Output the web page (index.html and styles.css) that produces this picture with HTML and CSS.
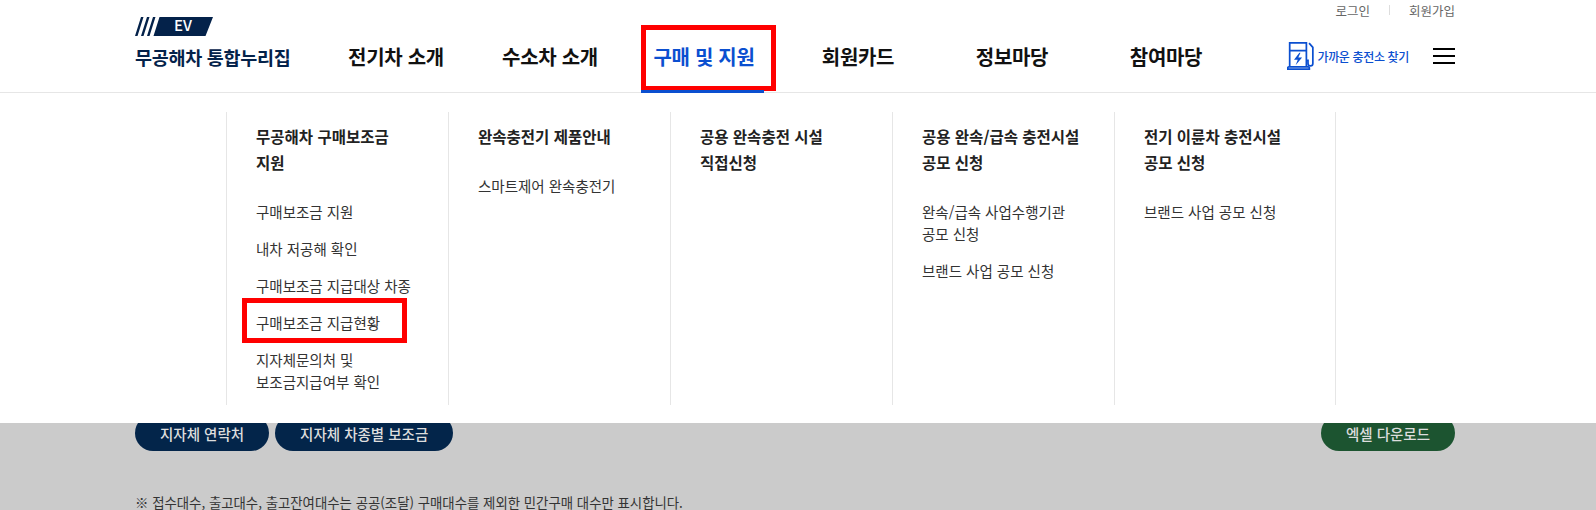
FILE: index.html
```html
<!DOCTYPE html>
<html lang="ko">
<head>
    <meta charset="UTF-8">
    <title>무공해차 통합누리집</title>
    <link rel="stylesheet" href="styles.css">
</head>
<body>
    <header class="header">
        <div class="util">
            <a href="#">로그인</a>
            <span class="util-sep"></span>
            <a href="#">회원가입</a>
        </div>
        <div class="header-row">
            <a href="#" class="logo">
                <svg class="logo-mark" width="78" height="19" viewBox="0 0 78 19">
                    <path d="M6 0h2.500L2.500 19H0zM12 0h2.500L8.500 19H6zM18 0h2.500l-6 19H12zM24.500 0H78l-7.500 19H18.500z" fill="#04224a"/>
                </svg>
                <span class="logo-ev">EV</span>
                <span class="logo-text">무공해차 통합누리집</span>
            </a>
            <nav class="gnb">
                <a href="#">전기차 소개</a>
                <a href="#">수소차 소개</a>
                <a href="#" class="active">구매 및 지원</a>
                <a href="#">회원카드</a>
                <a href="#">정보마당</a>
                <a href="#">참여마당</a>
            </nav>
            <a href="#" class="find">
                <svg width="28" height="28" viewBox="0 0 26 26" fill="none" stroke="#0b4fd0" stroke-width="1.600">
                    <path d="M2.500 23V.750H18V23M2.500 8h15.500"/>
                    <path d="M.750 25.250V24a1 1 0 0 1 1-1h18a1 1 0 0 1 1 1v1.250z"/>
                    <path d="M11.500 10l-5 6.500h3.500L8 21.500l6-7h-3.500l2-4.500z" fill="#0b4fd0" stroke="none"/>
                    <path d="M18 17h1.500v3a2.250 2.250 0 0 0 4.500 0V5l-3.500-4"/>
                </svg>
                <span>가까운 충전소 찾기</span>
            </a>
            <button class="burger"><i></i><i></i><i></i></button>
        </div>
    </header>

    <div class="dropdown">
        <div class="dropdown-inner">
            <div class="col">
                <h3>무공해차 구매보조금<br>지원</h3>
                <ul>
                    <li>구매보조금 지원</li>
                    <li>내차 저공해 확인</li>
                    <li>구매보조금 지급대상 차종</li>
                    <li class="marked">구매보조금 지급현황</li>
                    <li>지자체문의처 및<br>보조금지급여부 확인</li>
                </ul>
            </div>
            <div class="col">
                <h3>완속충전기 제품안내</h3>
                <ul>
                    <li>스마트제어 완속충전기</li>
                </ul>
            </div>
            <div class="col">
                <h3>공용 완속충전 시설<br>직접신청</h3>
            </div>
            <div class="col">
                <h3>공용 완속/급속 충전시설<br>공모 신청</h3>
                <ul>
                    <li>완속/급속 사업수행기관<br>공모 신청</li>
                    <li>브랜드 사업 공모 신청</li>
                </ul>
            </div>
            <div class="col">
                <h3>전기 이륜차 충전시설<br>공모 신청</h3>
                <ul>
                    <li>브랜드 사업 공모 신청</li>
                </ul>
            </div>
        </div>
    </div>

    <main class="content">
        <div class="btn-row">
            <a href="#" class="btn">지자체 연락처</a>
            <a href="#" class="btn">지자체 차종별 보조금</a>
            <a href="#" class="btn btn-excel">엑셀 다운로드</a>
        </div>
        <p class="note">※ 접수대수, 출고대수, 출고잔여대수는 공공(조달) 구매대수를 제외한 민간구매 대수만 표시합니다.</p>
    </main>
</body>
</html>
```

FILE: styles.css
```css
*, *::before, *::after {
    box-sizing: border-box;
}
html, body {
    height: 100%;
}
body {
    margin: 0;
    overflow: hidden;
    background-color: #cbcbcb;
    font-family: "Noto Sans CJK KR", "Noto Sans", sans-serif;
    color: #222;
}
a {
    color: inherit;
    text-decoration: none;
}

/* header */
.header {
    height: 93px;
    background-color: #fff;
    border-bottom: 1px solid #e6e6e6;
    padding: 0 141px 0 135px;
    position: relative;
}
.util {
    display: flex;
    justify-content: flex-end;
    align-items: center;
    height: 20px;
    font-size: 12.500px;
    color: #666;
}
.util-sep {
    width: 1px;
    height: 10px;
    margin: 0 19px;
    background-color: #ddd;
}
.header-row {
    display: flex;
    align-items: center;
    height: 72px;
}
.logo {
    position: relative;
    width: 184px;
    height: 72px;
    color: #04224a;
}
.logo-mark {
    position: absolute;
    left: 0;
    top: -3px;
}
.logo-ev {
    position: absolute;
    left: 39px;
    top: -6px;
    font-size: 15px;
    font-weight: 500;
    color: #fff;
}
.logo-text {
    position: absolute;
    left: 0;
    top: 24px;
    font-size: 18.500px;
    font-weight: 700;
    letter-spacing: -0.3px;
    white-space: nowrap;
}
.gnb {
    display: flex;
    flex: 1;
    font-size: 20px;
    font-weight: 700;
    letter-spacing: -0.3px;
    color: #111;
}
.gnb a {
    position: relative;
    width: 154px;
    padding-top: 2px;
    text-align: center;
    white-space: nowrap;
    line-height: 72px;
}
.gnb a.active {
    color: #0b4fd0;
}
.gnb a.active::before {
    content: "";
    position: absolute;
    left: 14px;
    right: 5px;
    top: 6px;
    bottom: 2px;
    border: 5px solid #f00;
}
.gnb a.active::after {
    content: "";
    position: absolute;
    left: 14px;
    width: 123px;
    bottom: 0;
    height: 3px;
    background-color: #0b4fd0;
}
.find {
    display: flex;
    align-items: center;
    gap: 2px;
    font-size: 12px;
    font-weight: 500;
    color: #0b4fd0;
    white-space: nowrap;
    letter-spacing: -0.35px;
}
.burger {
    display: flex;
    flex-direction: column;
    justify-content: space-between;
    width: 22px;
    height: 16px;
    margin-left: 24px;
    padding: 0;
    border: 0;
    background: none;
}
.burger i {
    display: block;
    height: 2px;
    background-color: #000;
}

/* dropdown */
.dropdown {
    position: absolute;
    left: 0;
    right: 0;
    top: 93px;
    height: 330px;
    padding-top: 19px;
    background-color: #fff;
    z-index: 2;
}
.dropdown-inner {
    display: flex;
    margin-left: 226px;
    height: 293px;
}
.col {
    width: 222px;
    padding: 11px 20px 0 29px;
    border-left: 1px solid #e6e6e6;
}
.col:last-child {
    border-right: 1px solid #e6e6e6;
}
.col h3 {
    margin: 0;
    font-size: 15.500px;
    line-height: 26px;
    font-weight: 700;
    color: #222;
    white-space: nowrap;
}
.col ul {
    list-style: none;
    margin: 26px 0 0;
    padding: 0;
}
.col li {
    position: relative;
    font-size: 14.500px;
    line-height: 22px;
    color: #333;
    margin-bottom: 15px;
    white-space: nowrap;
}
.marked::before {
    content: "";
    position: absolute;
    left: -14px;
    top: -14px;
    width: 165px;
    height: 45px;
    border: 5px solid #f00;
}

/* content under the menu */
.content {
    padding: 0 141px 0 135px;
}
.btn-row {
    display: flex;
    gap: 6px;
    margin-top: 322px;
}
.btn {
    height: 36px;
    line-height: 38px;
    padding: 0 25px;
    border-radius: 18px;
    background-color: #03254a;
    color: #ddd;
    font-size: 14.500px;
    font-weight: 500;
}
.btn-excel {
    margin-left: auto;
    background-color: #1c5430;
}
.note {
    margin: 41px 0 0;
    font-size: 13.400px;
    color: #333;
}
```
